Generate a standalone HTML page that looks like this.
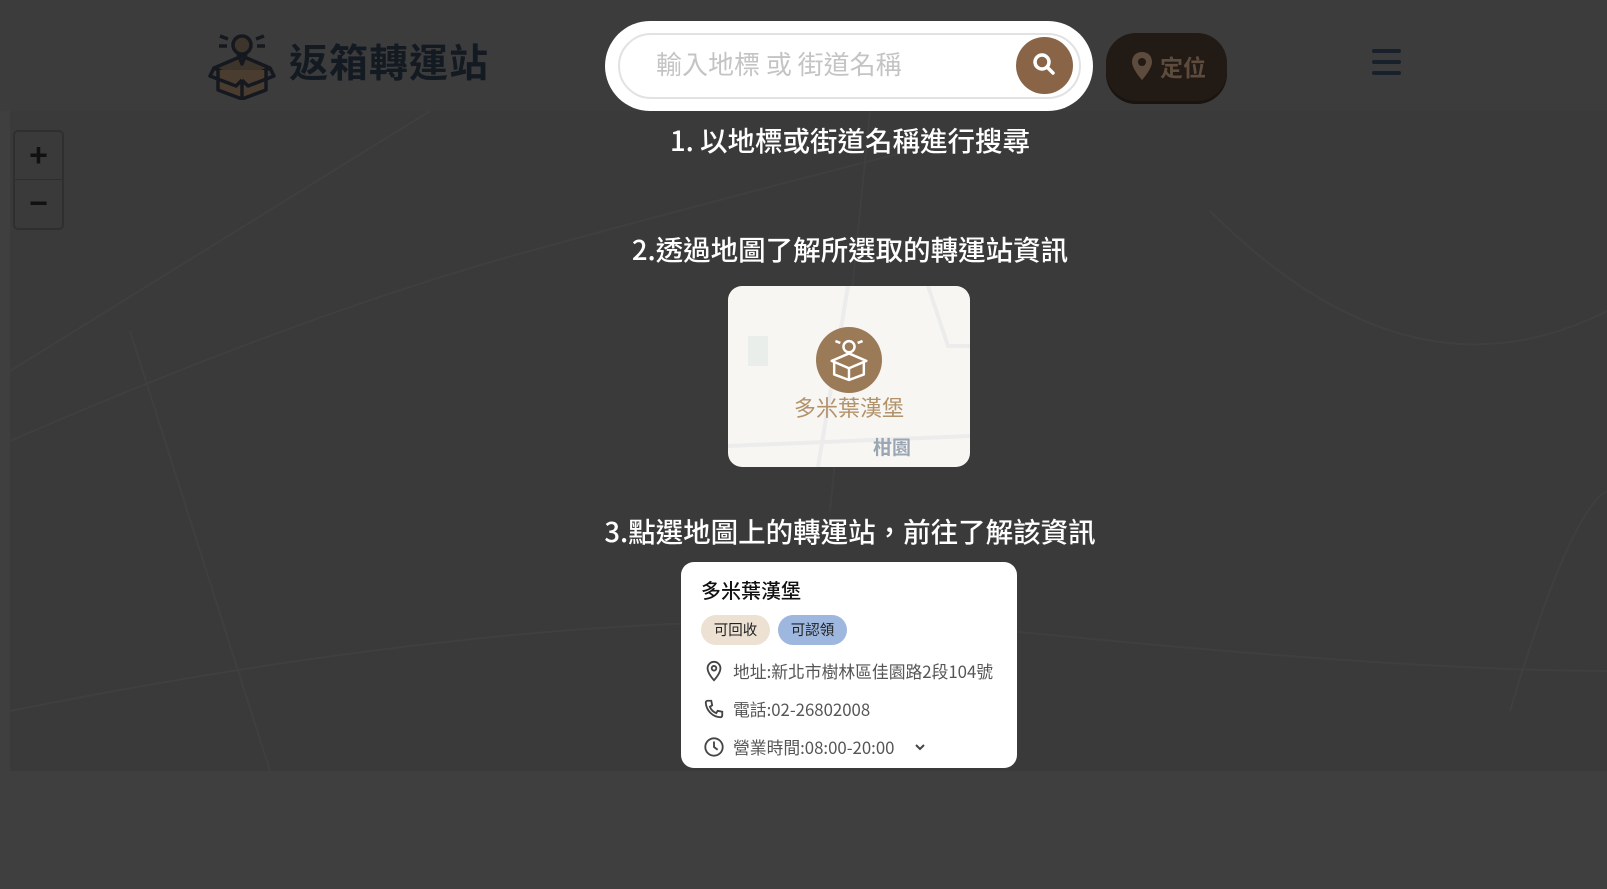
<!DOCTYPE html>
<html><head><meta charset="utf-8"><style>
*{margin:0;padding:0;box-sizing:border-box}
body{width:1607px;height:889px;background:#3f3f3f;font-family:"Noto Sans CJK TC","Liberation Sans",sans-serif;position:relative;overflow:hidden}
.map{position:absolute;left:10px;top:111px;width:1597px;height:660px;background:#3a3a3a}
.header{position:absolute;left:0;top:0;width:1607px;height:111px;background:#3c3c3c}
.logo{position:absolute;left:208px;top:30px}
.brand{position:absolute;left:289px;top:33px;font-size:39px;font-weight:bold;color:#141a22;letter-spacing:1px}
.pill{position:absolute;left:605px;top:21px;width:488px;height:90px;background:#fff;border-radius:45px}
.inp{position:absolute;left:618px;top:33px;width:463px;height:66px;border:2px solid #e2e2e2;border-radius:33px}
.ph{position:absolute;left:656px;top:45px;font-size:26px;color:#c4c4c4}
.sbtn{position:absolute;left:1016px;top:37px;width:57px;height:57px;border-radius:50%;background:#8a6446}
.loc{position:absolute;left:1106px;top:33px;width:121px;height:68px;border-radius:30px;background:#221a14;color:#5d4c3d;font-size:23px;font-weight:bold;line-height:66px;padding-left:54px;box-shadow:0 3px 0 #1a130e}
.ham{position:absolute;left:1372px;top:49px;width:29px}
.ham i{display:block;height:3.5px;background:#18202b;margin-bottom:7.5px;border-radius:2px}
.zoom{position:absolute;left:13px;top:130px;width:51px;height:100px;border:2px solid #2f2f2f;border-radius:5px;background:#3a3a3a}
.zoom div{height:48px;text-align:center;color:#111;font-size:32px;font-weight:bold;line-height:46px;font-family:"Liberation Sans",sans-serif}
.zoom div:first-child{border-bottom:1px solid #2f2f2f}
.t{position:absolute;left:0;width:1700px;text-align:center;color:#fff;font-size:27.5px;font-weight:500}
.c1{position:absolute;left:728px;top:286px;width:242px;height:181px;border-radius:14px;background:#f7f6f3;overflow:hidden}
.c2{position:absolute;left:681px;top:562px;width:336px;height:206px;border-radius:13px;background:#fff}
.tag{position:absolute;top:53px;height:30px;border-radius:15px;font-size:14.5px;line-height:30px;text-align:center;color:#222}
.row{position:absolute;left:52px;font-size:16.8px;color:#555;line-height:22px}
</style></head><body>
<div class="map"><svg width="1597" height="660" style="position:absolute;left:0;top:0" fill="none" stroke="#3f3f3f" stroke-width="2">
<path d="M0 330 Q300 200 520 140 T900 40"/><path d="M0 260 L420 0"/><path d="M120 220 L260 660"/><path d="M0 600 Q600 480 1000 520 T1597 560"/><path d="M860 0 L820 400"/><path d="M1200 100 Q1400 300 1597 200"/><path d="M1500 600 Q1560 400 1597 380"/>
</svg></div>
<div class="header"></div>
<svg class="logo" width="68" height="70" viewBox="0 0 68 70" fill="none" stroke="#15191f" stroke-width="3.5" stroke-linejoin="round">
<path d="M6 38 L34 26 L62 38 L34 50 Z" fill="#3d342b"/><path d="M10 40 V60 L34 69 L58 60 V40" fill="#4a3d30"/><path d="M34 50 V69"/><path d="M6 38 L2 46 L28 56 L34 50"/><path d="M62 38 L66 46 L40 56 L34 50"/>
<circle cx="34" cy="15" r="9" fill="#3d342b"/><path d="M30 24 L34 34 L38 24"/><path d="M12 6 L20 9 M56 6 L48 9 M11 16 L19 16 M57 16 L49 16"/>
</svg>
<div class="brand">返箱轉運站</div>
<div class="pill"></div><div class="inp"></div>
<div class="ph">輸入地標 或 街道名稱</div>
<div class="sbtn"><svg width="57" height="57" viewBox="0 0 57 57" fill="none" stroke="#fff" stroke-width="3.5"><circle cx="26" cy="25" r="7"/><path d="M31 30 L37 36" stroke-linecap="round"/></svg></div>
<div class="loc"><svg style="position:absolute;left:26px;top:19px" width="20" height="28" viewBox="0 0 20 28"><path d="M10 0 C4 0 0 4 0 10 C0 17 10 28 10 28 C10 28 20 17 20 10 C20 4 16 0 10 0 Z" fill="#5d4c3d"/><circle cx="10" cy="10" r="4" fill="#221a14"/></svg>定位</div>
<div class="ham"><i></i><i></i><i></i></div>
<div class="zoom"><div>+</div><div>−</div></div>
<div class="t" style="top:119px">1. 以地標或街道名稱進行搜尋</div>
<div class="t" style="top:228px">2.透過地圖了解所選取的轉運站資訊</div>
<div class="t" style="top:510px">3.點選地圖上的轉運站，前往了解該資訊</div>
<div class="c1">
<svg width="242" height="181" style="position:absolute;left:0;top:0" fill="none" stroke="#ececec" stroke-width="4"><path d="M120 0 L90 181"/><path d="M0 160 L242 150"/><path d="M200 0 L220 60 L242 60"/><rect x="20" y="50" width="20" height="30" fill="#eaeeeb" stroke="none"/></svg>
<div style="position:absolute;left:88px;top:41px;width:66px;height:66px;border-radius:50%;background:#9b7a57"></div>
<svg style="position:absolute;left:100px;top:50px" width="42" height="46" viewBox="0 0 68 70" fill="none" stroke="#fff" stroke-width="4" stroke-linejoin="round"><path d="M6 38 L34 26 L62 38 L34 50 Z"/><path d="M10 40 V60 L34 69 L58 60 V40"/><path d="M34 50 V69"/><circle cx="34" cy="15" r="9"/><path d="M12 6 L20 9 M56 6 L48 9"/></svg>
<div style="position:absolute;left:0;width:242px;top:105px;text-align:center;font-size:22px;color:#b2926b">多米葉漢堡</div>
<div style="position:absolute;left:145px;top:147px;font-size:19px;color:#9aa6b3;font-weight:bold">柑園</div>
</div>
<div class="c2">
<div style="position:absolute;left:20px;top:13px;font-size:20px;font-weight:500;color:#111">多米葉漢堡</div>
<div class="tag" style="left:20px;width:69px;background:#ece1d2">可回收</div>
<div class="tag" style="left:97px;width:69px;background:#9db7de">可認領</div>
<svg style="position:absolute;left:22px;top:98px" width="22" height="22" viewBox="0 0 24 24" fill="none" stroke="#444" stroke-width="2"><path d="M12 22 C12 22 19 15 19 9 A7 7 0 0 0 5 9 C5 15 12 22 12 22 Z"/><circle cx="12" cy="9" r="2.5"/></svg>
<div class="row" style="top:98px">地址:新北市樹林區佳園路2段104號</div>
<svg style="position:absolute;left:22px;top:136px" width="22" height="22" viewBox="0 0 24 24" fill="none" stroke="#444" stroke-width="2"><path d="M5 3 L9 3 L10 8 L7.5 9.5 A12 12 0 0 0 14.5 16.5 L16 14 L21 15 L21 19 A2 2 0 0 1 19 21 A17 17 0 0 1 3 5 A2 2 0 0 1 5 3 Z"/></svg>
<div class="row" style="top:136px">電話:02-26802008</div>
<svg style="position:absolute;left:22px;top:174px" width="22" height="22" viewBox="0 0 24 24" fill="none" stroke="#444" stroke-width="2"><circle cx="12" cy="12" r="9.5"/><path d="M12 6 V12 L16 15"/></svg>
<div class="row" style="top:174px">營業時間:08:00-20:00</div>
<svg style="position:absolute;left:232px;top:178px" width="14" height="14" viewBox="0 0 14 14" fill="none" stroke="#444" stroke-width="2"><path d="M3 5 L7 9 L11 5"/></svg>
</div>
</body></html>
